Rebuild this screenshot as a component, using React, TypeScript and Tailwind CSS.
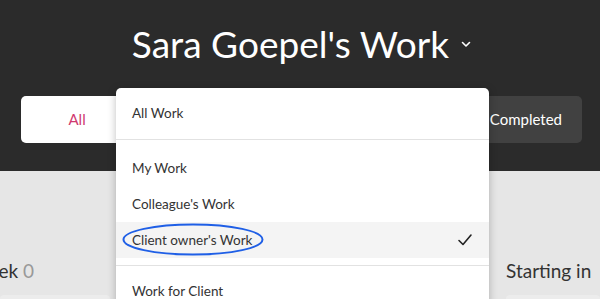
import React from 'react';

const tabs = ['All', 'Not Started', 'In Progress', 'Overdue', 'Completed'];

function ChevronDown() {
  return (
    <svg width="10" height="7" viewBox="0 0 10 7" fill="none" aria-hidden="true">
      <path d="M1.5 1.5 L5 5 L8.5 1.5" stroke="white" strokeWidth="1.6" strokeLinecap="round" strokeLinejoin="round" />
    </svg>
  );
}

function Check() {
  return (
    <svg width="16" height="14" viewBox="0 0 16 14" fill="none" aria-hidden="true">
      <path d="M2 7.5 L6 11.5 L14 2" stroke="#222" strokeWidth="1.6" strokeLinecap="round" strokeLinejoin="round" />
    </svg>
  );
}

function MenuItem({ label, selected = false }: { label: string; selected?: boolean }) {
  return (
    <div
      className={
        'relative flex h-9 items-center justify-between pl-4 pr-[16px] text-[13.5px] text-[#333] ' +
        (selected ? 'bg-[#f4f4f4]' : '')
      }
    >
      <span>{label}</span>
      {selected && <Check />}
      {selected && (
        <svg className="absolute left-[6px] top-[1px]" width="142" height="34" viewBox="0 0 142 34" fill="none">
          <ellipse cx="71" cy="16.5" rx="69.5" ry="15" stroke="#1f5fe6" strokeWidth="2" />
        </svg>
      )}
    </div>
  );
}

export default function App() {
  return (
    <div className="relative h-[299px] w-[600px] overflow-hidden bg-[#e6e6e6] font-['Lato','Open_Sans',sans-serif]">
      <header className="flex h-[171px] flex-col items-center bg-[#2b2b2b] pt-[21px]">
        <div className="flex items-center gap-[12px] pl-[3px]">
          <h1 className="text-[37px] leading-[46px] text-white">Sara Goepel's Work</h1>
          <ChevronDown />
        </div>
        <nav className="ml-[3px] mt-[29px] flex h-[47px] w-[561px] rounded-[5px] bg-[#414141]">
          {tabs.map((t, i) => (
            <div
              key={t}
              className={
                'flex flex-1 items-center justify-center text-[15px] ' +
                (i === 0 ? 'rounded-[5px] bg-white text-[#d0396f]' : 'text-white')
              }
            >
              {t}
            </div>
          ))}
        </nav>
      </header>

      <div className="flex justify-between pt-[88px]">
        <div className="w-[110px]">
          <div className="flex h-[24px] w-[34px] justify-end overflow-hidden whitespace-nowrap text-[19px] leading-[24px] text-[#333]">
            <span>
              This week <span className="text-[#999]">0</span>
            </span>
          </div>
          <div className="mt-[12px] h-[20px] rounded-[4px] bg-[#ececec]" />
        </div>
        <div className="w-[94px]">
          <div className="h-[24px] whitespace-nowrap text-[19px] leading-[24px] text-[#333]">Starting in</div>
          <div className="mt-[12px] h-[20px] rounded-[4px] bg-[#ececec]" />
        </div>
      </div>

      <div className="absolute left-[116px] top-[88px] w-[373px] rounded-[5px] bg-white shadow-[0_2px_8px_rgba(0,0,0,0.25)]">
        <div className="flex h-[51px] items-center px-4 text-[13.5px] text-[#333]">All Work</div>
        <div className="border-t border-[#e2e2e2] pb-[7px] pt-[10px]">
          <MenuItem label="My Work" />
          <MenuItem label="Colleague's Work" />
          <MenuItem label="Client owner's Work" selected />
        </div>
        <div className="border-t border-[#e2e2e2] pt-[7px]">
          <MenuItem label="Work for Client" />
        </div>
      </div>
    </div>
  );
}
